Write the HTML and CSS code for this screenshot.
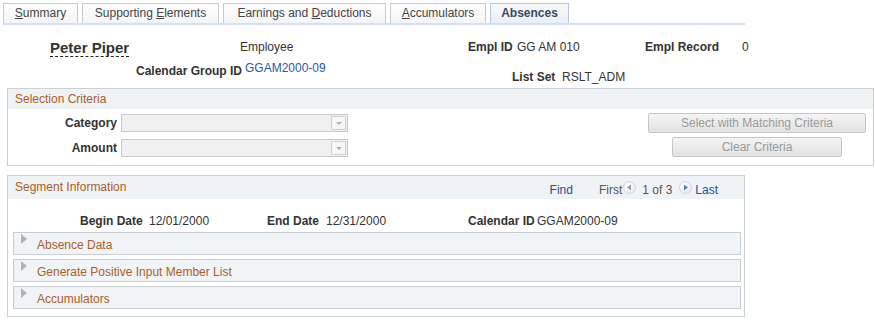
FILE: index.html
```html
<!DOCTYPE html>
<html>
<head>
<meta charset="utf-8">
<link rel="stylesheet" href="styles.css">
</head>
<body>
<div class="tabs">
  <div class="tab t1"><u>S</u>ummary</div>
  <div class="tab t2">Supporting <u>E</u>lements</div>
  <div class="tab t3">Earnings and <u>D</u>eductions</div>
  <div class="tab t4"><u>A</u>ccumulators</div>
  <div class="tab t5 active">Absences</div>
</div>
<div class="tabline"></div>

<div class="hdr">
  <div class="row1">
    <div class="c-name"><span class="name">Peter Piper</span></div>
    <div class="c-emp">Employee</div>
    <div class="lbl c-eidl">Empl ID</div>
    <div class="c-eid">GG AM 010</div>
    <div class="lbl c-erl">Empl Record</div>
    <div class="c-er">0</div>
  </div>
  <div class="row2">
    <div class="lbl c-cgl">Calendar Group ID</div>
    <div class="link c-cg">GGAM2000-09</div>
    <div class="lbl c-lsl">List Set</div>
    <div class="c-ls">RSLT_ADM</div>
  </div>
</div>

<div class="box sel">
  <div class="band"><span class="title">Selection Criteria</span></div>
  <div class="selbody">
    <div class="fields">
      <div class="lbl flabel">Category</div>
      <div class="dd"><span class="ddbtn"><span class="ddarrow"></span></span></div>
      <div class="lbl flabel">Amount</div>
      <div class="dd"><span class="ddbtn"><span class="ddarrow"></span></span></div>
    </div>
    <div class="btns">
      <div class="btn b1">Select with Matching Criteria</div>
      <div class="btn b2">Clear Criteria</div>
    </div>
  </div>
</div>

<div class="box seg">
  <div class="band segband">
    <span class="title">Segment Information</span>
    <div class="nav">
      <span class="navlink find">Find</span>
      <span class="first">First</span>
      <span class="circ prev"><svg width="13" height="13" viewBox="0 0 13 13"><polygon points="8,3.5 4,6.5 8,9.5" fill="#9a9a9a"/></svg></span>
      <span class="count">1 of 3</span>
      <span class="circ next"><svg width="13" height="13" viewBox="0 0 13 13"><polygon points="5,3.5 9,6.5 5,9.5" fill="#4a7fc0"/></svg></span>
      <span class="navlink">Last</span>
    </div>
  </div>
  <div class="dates">
    <span class="lbl d-bl">Begin Date</span>
    <span class="d-bv">12/01/2000</span>
    <span class="lbl d-el">End Date</span>
    <span class="d-ev">12/31/2000</span>
    <span class="lbl d-cl">Calendar ID</span>
    <span class="d-cv">GGAM2000-09</span>
  </div>
  <div class="coll"><span class="tri"></span><span class="ctitle">Absence Data</span></div>
  <div class="coll"><span class="tri"></span><span class="ctitle">Generate Positive Input Member List</span></div>
  <div class="coll"><span class="tri"></span><span class="ctitle">Accumulators</span></div>
</div>
</body>
</html>
```

FILE: styles.css
```css
* { box-sizing: border-box; }
body {
  margin: 0;
  font-family: "Liberation Sans", Arial, sans-serif;
  font-size: 12px;
  color: #333;
  background: #fff;
}
u { text-decoration: underline; }

.tabs {
  display: flex;
  gap: 4px;
  padding: 3px 0 0 3px;
  height: 23px;
}
.tab {
  height: 20px;
  border: 1px solid #c6cbd1;
  border-bottom: none;
  background: linear-gradient(#ffffff, #f3f4f5);
  color: #444;
  line-height: 19px;
  text-align: center;
}
.t1 { width: 75px; }
.t2 { width: 137px; }
.t3 { width: 163px; }
.t4 { width: 96px; }
.t5 { width: 79px; }
.tab.active {
  font-weight: bold;
  color: #3d4a5a;
  border-color: #b9c8d9;
  background: linear-gradient(#f7fafd, #e8eff7);
}
.tabline {
  margin-left: 3px;
  width: 742px;
  height: 2px;
  background: #d5e1ee;
}

.lbl { font-weight: bold; color: #333; }
.link { color: #1f5aa8; }

.hdr { padding: 14px 0 0 50px; height: 63px; }
.row1 { display: flex; align-items: flex-start; height: 18px; }
.c-name { width: 190px; }
.name {
  display: inline-block;
  font-size: 15px;
  font-weight: bold;
  line-height: 17px;
  color: #333;
  border-bottom: 1px dashed #222;
}
.c-emp { width: 228px; line-height: 16px; }
.c-eidl { width: 49px; line-height: 16px; }
.c-eid { width: 128px; line-height: 16px; }
.c-erl { width: 97px; line-height: 16px; }
.c-er { line-height: 16px; }

.row2 { display: flex; align-items: flex-start; margin: 3px 0 0 86px; }
.c-cgl { width: 109px; line-height: 16px; margin-top: 3px; }
.c-cg { width: 267px; line-height: 16px; }
.c-lsl { width: 50px; line-height: 16px; margin-top: 9px; }
.c-ls { line-height: 16px; margin-top: 9px; }

.box { border: 1px solid #cbd0d6; margin-left: 7px; }
.band {
  background: #eff3f5;
  display: flex;
  align-items: center;
  padding-left: 7px;
}
.title { color: #b15b1f; }

.sel { width: 867px; }
.sel .band { height: 20px; }
.selbody {
  display: flex;
  justify-content: space-between;
  padding: 4px 7px 8px 0;
}
.fields {
  display: grid;
  grid-template-columns: 109px 227px;
  column-gap: 4px;
  row-gap: 7px;
  align-items: center;
  margin-top: 1px;
}
.flabel { text-align: right; }
.dd {
  height: 18px;
  border: 1px solid #c9c9c9;
  background: #f0f0f0;
  display: flex;
  justify-content: flex-end;
  padding: 1px;
}
.ddbtn {
  width: 15px;
  height: 14px;
  border: 1px solid #d2d2d2;
  background: #f7f7f7;
  display: flex;
  align-items: center;
  justify-content: center;
}
.ddarrow {
  width: 0; height: 0;
  border-left: 3px solid transparent;
  border-right: 3px solid transparent;
  border-top: 3px solid #b0b0b0;
}
.btns {
  display: flex;
  flex-direction: column;
  align-items: center;
  gap: 4px;
}
.btn {
  height: 20px;
  border: 1px solid #c6c6c6;
  border-radius: 2px;
  background: linear-gradient(#f4f4f4, #e2e2e2);
  color: #9a9a9a;
  text-align: center;
  line-height: 18px;
}
.b1 { width: 218px; }
.b2 { width: 170px; }

.seg { width: 738px; margin-top: 9px; padding: 0 3px 7px 5px; }
.segband {
  height: 23px;
  margin: 0 -3px 0 -5px;
  justify-content: space-between;
  padding-bottom: 1px;
}
.nav {
  display: flex;
  align-items: center;
  padding-right: 26px;
  margin-top: 5px;
}
.navlink { color: #1f4f98; }
.find { margin-right: 26px; }
.first { color: #555; margin-right: 1px; }
.count { color: #555; margin: 0 7px 0 6px; }
.circ {
  width: 13px; height: 13px;
  border-radius: 50%;
  border: 1px solid #d0d6dc;
  background: radial-gradient(circle at 40% 35%, #ffffff, #dfe6ee);
  display: inline-flex;
  margin-top: -4px;
}
.circ svg { margin: -1px; }
.next { margin-right: 3px; }

.dates {
  display: flex;
  margin-top: 14px;
  padding-left: 67px;
  line-height: 16px;
  height: 19px;
}
.d-bl { width: 69px; }
.d-bv { width: 118px; }
.d-el { width: 59px; }
.d-ev { width: 142px; }
.d-cl { width: 69px; }

.coll {
  height: 23px;
  margin-top: 4px;
  border: 1px solid #c9ced4;
  background: #f0f4f6;
  display: flex;
  align-items: flex-start;
  padding-left: 7px;
}
.dates + .coll { margin-top: 0; }
.tri {
  width: 0; height: 0;
  margin-top: 1px;
  border-top: 5px solid transparent;
  border-bottom: 5px solid transparent;
  border-left: 6px solid #b3b3b3;
}
.ctitle { color: #b15b1f; margin-left: 10px; line-height: 16px; margin-top: 4px; }
```
